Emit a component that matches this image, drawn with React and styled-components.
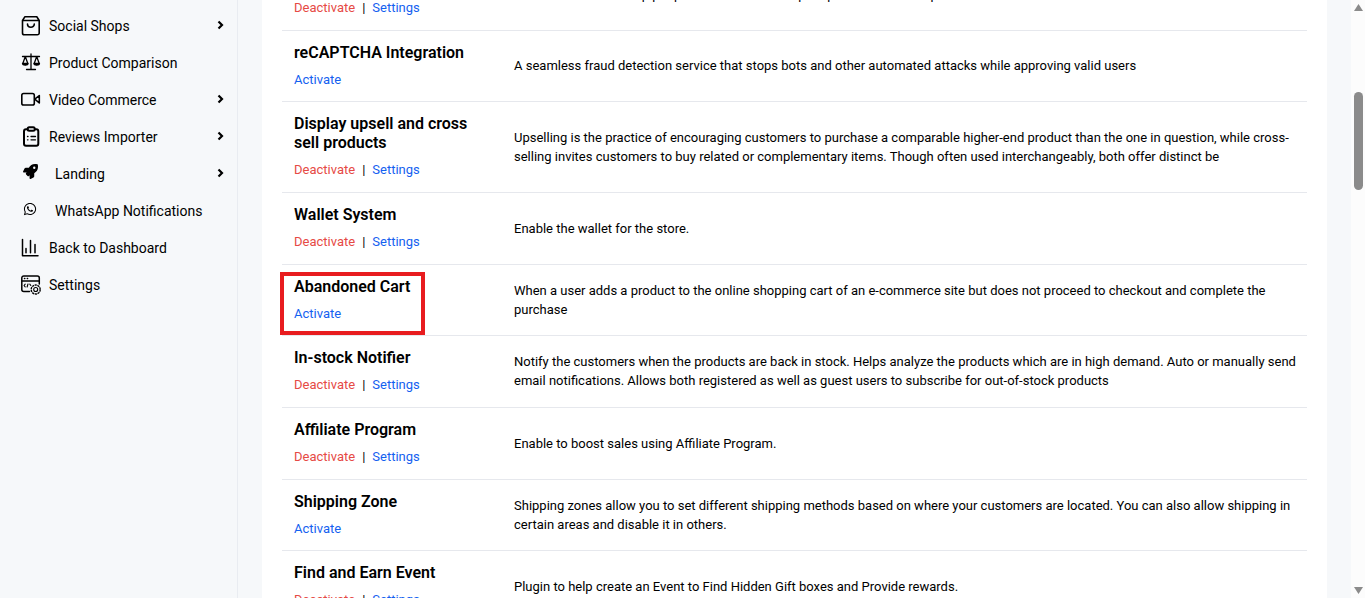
import React from "react";
import styled, { createGlobalStyle } from "styled-components";
import { FaRocket, FaWhatsapp } from "react-icons/fa";

const GlobalStyle = createGlobalStyle`
  *, *::before, *::after { box-sizing: border-box; }
  body {
    margin: 0;
    background: #f6f8fa;
    color: #000;
    font-family: Roboto, "Liberation Sans", sans-serif;
    font-size: 13px;
    line-height: 20px;
  }
`;

const Shell = styled.div`
  display: flex;
  height: 100vh;
  overflow: hidden;
`;

const Sidebar = styled.nav`
  flex: 0 0 238px;
  padding: 7px 12px 0 20px;
  border-right: 1px solid #e9ecf1;
`;

const Menu = styled.ul`
  list-style: none;
  margin: 0;
  padding: 0;
`;

const MenuLink = styled.a`
  display: flex;
  align-items: center;
  gap: ${(p) => (p.$plugin ? "14px" : "8px")};
  height: 37px;
  color: #000;
  font-size: 14px;
  text-decoration: none;
`;

const MenuLabel = styled.span`
  flex: 1;
`;

const IconSlot = styled.span`
  display: flex;
  align-items: center;
  justify-content: center;
  width: 21px;
  height: 21px;
  padding: ${(p) => (p.$plugin ? "0 1px 4px 0" : "0")};
  svg { display: block; }
`;

const ChevronSlot = styled.span`
  display: flex;
  padding-bottom: 2px;
`;

const Content = styled.main`
  flex: 1;
  min-width: 0;
  padding: 0 24px;
`;

const Panel = styled.section`
  height: 100%;
  padding: 0 20px;
  overflow: hidden;
  background: #fff;
`;

const PluginTable = styled.table`
  width: 100%;
  margin-top: -41px;
  border-collapse: separate;
  border-spacing: 0;
  table-layout: fixed;
`;

const Cell = styled.td`
  padding: 11px 0 12px 12px;
  border-bottom: 1px solid #e6e8ed;
  line-height: 19px;
  vertical-align: middle;
`;

const NameCell = styled(Cell).attrs({ as: "th", scope: "row" })`
  position: relative;
  width: 220px;
  padding: 12px 12px 11px;
  text-align: left;
  font-weight: 400;
`;

const PluginName = styled.h2`
  margin: 0 0 8px;
  font-size: 16px;
  font-weight: 600;
  line-height: 19px;
`;

const Actions = styled.div`
  display: flex;
  align-items: flex-start;
  min-height: ${(p) => (p.$pair ? "21px" : "20px")};
  line-height: 20px;
`;

const Separator = styled.span`
  padding: 0 7px;
`;

const ActionButton = styled.button`
  padding: 0;
  border: 0;
  background: none;
  color: ${(p) => (p.$danger ? "#e64a45" : "#1461f0")};
  font: inherit;
  cursor: pointer;
`;

const ActionLink = styled.a`
  color: #1461f0;
  text-decoration: none;
`;

const Highlight = styled.span`
  position: absolute;
  inset: 7px 77px 0 -2px;
  border: 4px solid #e81c1f;
  pointer-events: none;
`;

const ScrollTrack = styled.div`
  display: flex;
  flex: 0 0 14px;
  flex-direction: column;
  align-items: center;
  padding: 4px 1px 4px 2px;
  background: #fcfcfc;
`;

const ScrollThumb = styled.div`
  width: 9px;
  height: 98px;
  margin: 81px 0 auto;
  border-radius: 5px;
  background: #8b8b8b;
`;

const stroke = {
  fill: "none",
  stroke: "currentColor",
  strokeWidth: 1.6,
  strokeLinecap: "round",
  strokeLinejoin: "round",
};

const BagIcon = () => (
  <svg width="21" height="21" viewBox="0 0 21 21" {...stroke}>
    <path d="M2.500 5.500 4.800 1.800h12L19.200 5.500V18a1.800 1.800 0 0 1-1.800 1.800H4.300A1.800 1.800 0 0 1 2.500 18ZM2.500 5.500H19.200" />
    <path d="M7.500 9c0 4.300 6.800 4.300 6.800 0" />
  </svg>
);

const ScaleIcon = () => (
  <svg width="21" height="21" viewBox="0 0 21 21" {...stroke} strokeWidth="1.3">
    <path d="M11 2V17.500M6.500 17.500h9M2.500 4.500h17M5.300 4.500 3 11M5.300 4.500 7.600 11M16.700 4.500 14.400 11M16.700 4.500 19 11" />
    <path fill="currentColor" d="M2.500 11.500h5.600c-.3 2.200-5.300 2.200-5.600 0ZM13.900 11.500h5.600c-.3 2.200-5.300 2.200-5.600 0Z" />
  </svg>
);

const VideoIcon = () => (
  <svg width="21" height="21" viewBox="0 0 21 21" {...stroke}>
    <rect x="1.800" y="4.500" width="12.500" height="11.500" rx="1.800" />
    <path d="M14.800 10.200 19.300 6.500v7.500Z" />
  </svg>
);

const ClipboardIcon = () => (
  <svg width="21" height="21" viewBox="0 0 21 21" {...stroke} strokeWidth="2">
    <path d="M7.500 3.300H6a2 2 0 0 0-2 2v12.400a2 2 0 0 0 2 2h10.300a2 2 0 0 0 2-2V5.300a2 2 0 0 0-2-2H15" />
    <rect x="7.700" y="1.200" width="7" height="3.600" rx="1.500" />
    <path strokeWidth="1.300" d="M11 10.500h4.500M11 13.800h4.500M7.500 10.500h.5M7.500 13.800h.5" />
  </svg>
);

const ChartIcon = () => (
  <svg width="21" height="21" viewBox="0 0 21 21" {...stroke} strokeWidth="1.500">
    <path d="M2.500 2.500v16.300H18M6 11.500v4.300M10.500 3.500v12.300M15 7.500v8.300" />
  </svg>
);

const SettingsIcon = () => (
  <svg width="21" height="21" viewBox="0 0 21 21" {...stroke} strokeWidth="1.500">
    <path d="M9.500 17.500H3.800a2 2 0 0 1-2-2V4a2 2 0 0 1 2-2h13.500a2 2 0 0 1 2 2V10M1.800 7h17.500" />
    <path d="M4.500 4.600h.3M7.300 4.600h.3" />
    <path strokeWidth="1.100" d="M5.200 10.200 4 11.500l1.200 1.300M9.800 10.200l1 1.300M8 10l-.9 3" />
    <circle cx="15.700" cy="15.500" r="4.500" strokeWidth="1.400" strokeDasharray="2.200 .600" strokeLinecap="butt" />
    <circle cx="15.700" cy="15.500" r="2" strokeWidth="1.100" />
  </svg>
);

const Chevron = () => (
  <svg width="8" height="10" viewBox="0 0 8 10" fill="none" stroke="currentColor" strokeWidth="2.200">
    <path d="M1.500 1.500 5 5 1.500 8.500" />
  </svg>
);

const menu = [
  { label: "Social Shops", icon: <BagIcon />, sub: true },
  { label: "Product Comparison", icon: <ScaleIcon /> },
  { label: "Video Commerce", icon: <VideoIcon />, sub: true },
  { label: "Reviews Importer", icon: <ClipboardIcon />, sub: true },
  { label: "Landing", icon: <FaRocket size={15} />, sub: true, plugin: true },
  { label: "WhatsApp Notifications", icon: <FaWhatsapp size={14} />, plugin: true },
  { label: "Back to Dashboard", icon: <ChartIcon /> },
  { label: "Settings", icon: <SettingsIcon /> },
];

const plugins = [
  {
    name: "Related Items",
    active: true,
    text: "Enable the tools to help people find related items put up in the store at a price",
  },
  {
    name: "reCAPTCHA Integration",
    text: "A seamless fraud detection service that stops bots and other automated attacks while approving valid users",
  },
  {
    name: "Display upsell and cross sell products",
    active: true,
    text: "Upselling is the practice of encouraging customers to purchase a comparable higher-end product than the one in question, while cross-selling invites customers to buy related or complementary items. Though often used interchangeably, both offer distinct be",
  },
  { name: "Wallet System", active: true, text: "Enable the wallet for the store." },
  {
    name: "Abandoned Cart",
    highlighted: true,
    text: "When a user adds a product to the online shopping cart of an e-commerce site but does not proceed to checkout and complete the purchase",
  },
  {
    name: "In-stock Notifier",
    active: true,
    text: "Notify the customers when the products are back in stock. Helps analyze the products which are in high demand. Auto or manually send email notifications. Allows both registered as well as guest users to subscribe for out-of-stock products",
  },
  { name: "Affiliate Program", active: true, text: "Enable to boost sales using Affiliate Program." },
  {
    name: "Shipping Zone",
    text: "Shipping zones allow you to set different shipping methods based on where your customers are located. You can also allow shipping in certain areas and disable it in others.",
  },
  {
    name: "Find and Earn Event",
    active: true,
    text: "Plugin to help create an Event to Find Hidden Gift boxes and Provide rewards.",
  },
];

function PluginRow({ name, active, highlighted, text }) {
  return (
    <tr>
      <NameCell>
        <PluginName>{name}</PluginName>
        <Actions $pair={active}>
          {active ? (
            <>
              <ActionButton type="button" $danger>Deactivate</ActionButton>
              <Separator>|</Separator>
              <ActionLink href="#settings">Settings</ActionLink>
            </>
          ) : (
            <ActionButton type="button">Activate</ActionButton>
          )}
        </Actions>
        {highlighted && <Highlight />}
      </NameCell>
      <Cell>{text}</Cell>
    </tr>
  );
}

export default function App() {
  return (
    <>
      <GlobalStyle />
      <Shell>
        <Sidebar aria-label="Store">
          <Menu>
            {menu.map((item) => (
              <li key={item.label}>
                <MenuLink href="#" $plugin={item.plugin}>
                  <IconSlot $plugin={item.plugin}>{item.icon}</IconSlot>
                  <MenuLabel>{item.label}</MenuLabel>
                  {item.sub && (
                    <ChevronSlot>
                      <Chevron />
                    </ChevronSlot>
                  )}
                </MenuLink>
              </li>
            ))}
          </Menu>
        </Sidebar>
        <Content>
          <Panel>
            <PluginTable>
              <tbody>
                {plugins.map((plugin) => (
                  <PluginRow key={plugin.name} {...plugin} />
                ))}
              </tbody>
            </PluginTable>
          </Panel>
        </Content>
        <ScrollTrack aria-hidden="true">
          <svg width="9" height="7" viewBox="0 0 9 7" fill="#8b8b8b"><path d="M4.500 0 9 7H0Z" /></svg>
          <ScrollThumb />
          <svg width="9" height="7" viewBox="0 0 9 7" fill="#8b8b8b"><path d="M0 0h9L4.500 7Z" /></svg>
        </ScrollTrack>
      </Shell>
    </>
  );
}
